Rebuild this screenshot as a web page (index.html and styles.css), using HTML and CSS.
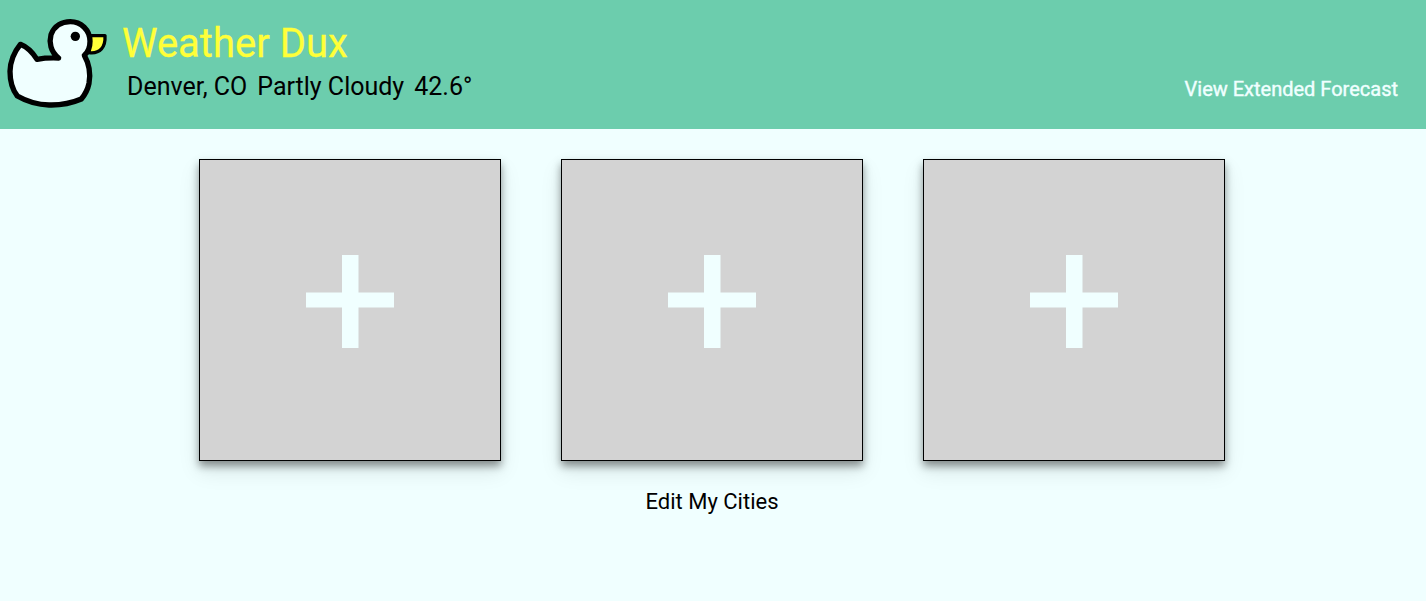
FILE: index.html
```html
<!DOCTYPE html>
<html lang="en">
<head>
<meta charset="utf-8">
<title>Weather Dux</title>
<link rel="stylesheet" href="styles.css">
</head>
<body>
<header class="header">
  <svg class="logo" viewBox="0 0 360 315" aria-hidden="true">
    <path class="beak" d="M270 77H315C317 111 301 132 267 128Z"/>
    <path class="duck" d="M61 103C85 112 98 128 111 148C132 144 153 143 176 144C151 125 147 96 153 74C163 47 186 35 211 35C243 35 270 60 270 94C270 113 264 127 253 136C270 166 272 193 267 220C263 239 254 255 244 267C211 281 180 286 147 285C111 284 78 273 52 258C35 237 30 211 30 184C31 153 44 124 61 103Z"/>
    <circle cx="226" cy="79" r="14"/>
  </svg>
  <div class="heading">
    <h1 class="title">Weather Dux</h1>
    <div class="current"><span>Denver, CO</span><span>Partly Cloudy</span><span>42.6°</span></div>
  </div>
  <a class="forecast">View Extended Forecast</a>
</header>
<main class="main">
  <div class="cities">
    <div class="card"><svg class="plus" viewBox="0 0 88 93"><path d="M36 0H52.500V37.500H88V52.500H52.500V93H36V52.500H0V37.500H36Z"/></svg></div>
    <div class="card"><svg class="plus" viewBox="0 0 88 93"><path d="M36 0H52.500V37.500H88V52.500H52.500V93H36V52.500H0V37.500H36Z"/></svg></div>
    <div class="card"><svg class="plus" viewBox="0 0 88 93"><path d="M36 0H52.500V37.500H88V52.500H52.500V93H36V52.500H0V37.500H36Z"/></svg></div>
  </div>
  <a class="edit">Edit My Cities</a>
</main>
</body>
</html>
```
FILE: styles.css
```css
* { box-sizing: border-box; }
body {
  margin: 0;
  min-height: 601px;
  background: #f0ffff;
  color: #000;
  font-family: Roboto, sans-serif;
}
.header {
  display: flex;
  height: 129px;
  padding-right: 28px;
  background: #6ccdad;
}
.logo { width: 120px; height: 105px; margin-top: 10px; flex: none; }
.duck { fill: #f0ffff; stroke: #000; stroke-width: 16; stroke-linejoin: round; }
.beak { fill: #ffff38; stroke: #000; stroke-width: 10; stroke-linejoin: round; }
.heading { padding: 20px 0 0 2px; }
.title {
  margin: 0;
  color: #ffff38;
  font-size: 40px;
  font-weight: 400;
  line-height: 47px;
  -webkit-text-stroke: .3px #ffff38;
}
.current {
  display: flex;
  gap: 10px;
  margin: 5px 0 0 5px;
  font-size: 25px;
  line-height: 29px;
}
.forecast {
  margin: 77px 0 0 auto;
  color: #f0ffff;
  font-size: 20px;
  line-height: 24px;
  -webkit-text-stroke: .4px #f0ffff;
}
.main {
  display: flex;
  flex-direction: column;
  align-items: center;
  padding: 30px 2px 0 0;
}
.cities { display: flex; gap: 60px; }
.card {
  width: 302px;
  height: 302px;
  padding: 95px 0 0 106px;
  border: 1px solid #000;
  background: #d3d3d3;
  box-shadow: 0 10px 20px rgba(0, 0, 0, .1), 0 5px 8px rgba(0, 0, 0, .4);
}
.plus { display: block; width: 88px; height: 93px; fill: #f0ffff; }
.edit { margin-top: 28px; font-size: 22px; line-height: 26px; }
```
